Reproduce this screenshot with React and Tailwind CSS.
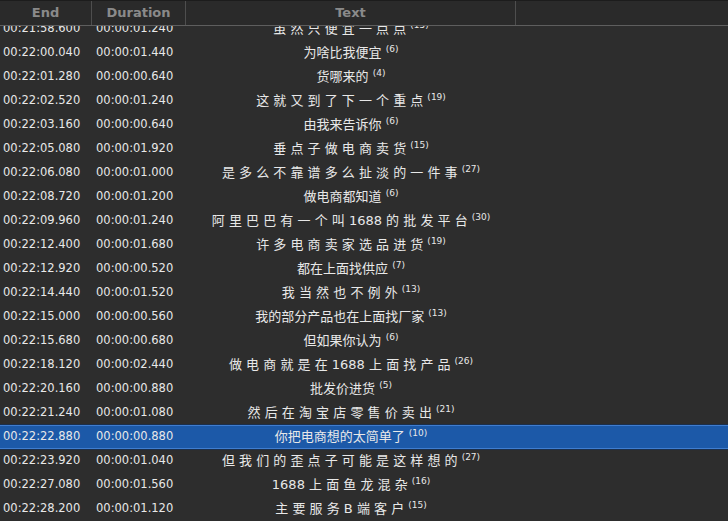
const rows = [
  ['00:21:58.600', '00:00:01.240', '虽 然 只 便 宜 一 点 点', 15],
  ['00:22:00.040', '00:00:01.440', '为啥比我便宜', 6],
  ['00:22:01.280', '00:00:00.640', '货哪来的', 4],
  ['00:22:02.520', '00:00:01.240', '这 就 又 到 了 下 一 个 重 点', 19],
  ['00:22:03.160', '00:00:00.640', '由我来告诉你', 6],
  ['00:22:05.080', '00:00:01.920', '垂 点 子 做 电 商 卖 货', 15],
  ['00:22:06.080', '00:00:01.000', '是 多 么 不 靠 谱 多 么 扯 淡 的 一 件 事', 27],
  ['00:22:08.720', '00:00:01.200', '做电商都知道', 6],
  ['00:22:09.960', '00:00:01.240', '阿 里 巴 巴 有 一 个 叫 1688 的 批 发 平 台', 30],
  ['00:22:12.400', '00:00:01.680', '许 多 电 商 卖 家 选 品 进 货', 19],
  ['00:22:12.920', '00:00:00.520', '都在上面找供应', 7],
  ['00:22:14.440', '00:00:01.520', '我 当 然 也 不 例 外', 13],
  ['00:22:15.000', '00:00:00.560', '我的部分产品也在上面找厂家', 13],
  ['00:22:15.680', '00:00:00.680', '但如果你认为', 6],
  ['00:22:18.120', '00:00:02.440', '做 电 商 就 是 在 1688 上 面 找 产 品', 26],
  ['00:22:20.160', '00:00:00.880', '批发价进货', 5],
  ['00:22:21.240', '00:00:01.080', '然 后 在 淘 宝 店 零 售 价 卖 出', 21],
  ['00:22:22.880', '00:00:00.880', '你把电商想的太简单了', 10],
  ['00:22:23.920', '00:00:01.040', '但 我 们 的 歪 点 子 可 能 是 这 样 想 的', 27],
  ['00:22:27.080', '00:00:01.560', '1688 上 面 鱼 龙 混 杂', 16],
  ['00:22:28.200', '00:00:01.120', '主 要 服 务 B 端 客 户', 15],
];

const SELECTED = 17;

function Row({ end, dur, text, count, selected }) {
  return (
    <div
      className={
        'flex h-[24px] items-center ' +
        (selected ? 'bg-[#1c59a8] border-y border-[#3f7dcf] shadow-[0_0_0_1px_#1a2f4d]' : '')
      }
    >
      <div className="w-[92px] shrink-0 pl-[3px] text-[11.5px]">{end}</div>
      <div className="w-[94px] shrink-0 pl-[4px] text-[11.5px]">{dur}</div>
      <div className="w-[330px] shrink-0 text-center text-[13px] whitespace-pre">
        {text}
        <span className="relative -top-[5px] ml-[4px] text-[9px]">({count})</span>
      </div>
    </div>
  );
}

export default function App() {
  return (
    <div className="h-[521px] w-[728px] overflow-hidden bg-[#2d2d2d] text-[#e8e8e8] font-['DejaVu_Sans','Noto_Sans_CJK_SC',sans-serif] flex flex-col">
      {/* header */}
      <div className="flex h-[26px] shrink-0 border-t border-t-[#1c1c1c] border-b border-b-[#5e5e5e] bg-[#2a2a2a] text-[13px] font-bold text-[#8a8a8a]">
        <div className="w-[92px] shrink-0 border-r border-[#4e4e4e] flex items-center justify-center">End</div>
        <div className="w-[94px] shrink-0 border-r border-[#4e4e4e] flex items-center justify-center">Duration</div>
        <div className="w-[330px] shrink-0 border-r border-[#4e4e4e] flex items-center justify-center">Text</div>
        <div className="flex-1" />
      </div>
      {/* rows */}
      <div className="flex-1 overflow-hidden">
        <div className="-mt-[9px]">
          {rows.map((r, i) => (
            <Row key={i} end={r[0]} dur={r[1]} text={r[2]} count={r[3]} selected={i === SELECTED} />
          ))}
        </div>
      </div>
    </div>
  );
}
